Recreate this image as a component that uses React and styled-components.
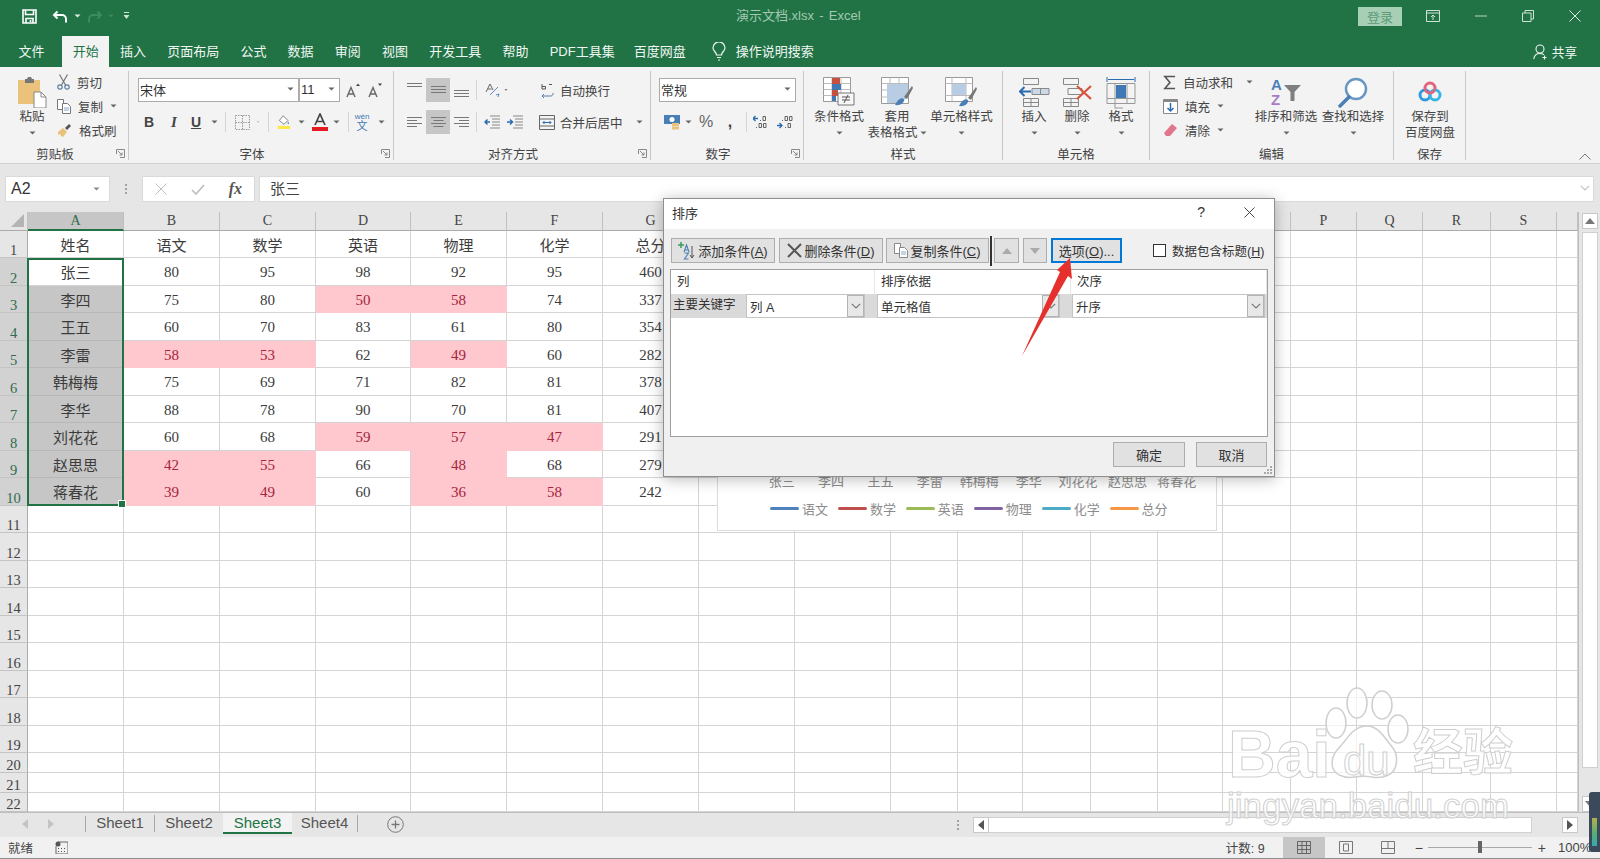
import React from "react";
import styled, { createGlobalStyle } from "styled-components";

const UI = `"Liberation Sans", "Noto Sans CJK SC", sans-serif`;
const CELL = `"Liberation Serif", "Noto Sans CJK SC", serif`;
const GREEN = "#217346";

const Global = createGlobalStyle`
  html, body { margin: 0; height: 100%; overflow: hidden; background: #fff; }
  #root { height: 100%; }
`;

const Page = styled.div`
  position: relative;
  width: 1600px;
  height: 859px;
  overflow: hidden;
  display: flex;
  flex-direction: column;
  font-family: ${UI};
  color: #444;
`;

/* ---------- title bar ---------- */
const TitleBar = styled.div`
  height: 34px;
  box-sizing: border-box;
  padding-bottom: 2px;
  background: ${GREEN};
  display: flex;
  align-items: center;
  flex: none;
`;
const QuickBtn = styled.span`
  width: ${p => p.$w}px;
  margin-left: ${p => p.$ml || 0}px;
  display: flex;
  justify-content: center;
  align-items: center;
  flex: none;
`;
const DocTitle = styled.div`
  width: 125px;
  margin-left: 598px;
  margin-bottom: 3px;
  font-size: 13px;
  word-spacing: -1px;
  color: #a3c9b1;
  white-space: pre;
`;
const Login = styled.button`
  margin-left: 497px;
  width: 44px;
  height: 19px;
  padding: 0;
  border: 0;
  background: #a6cfb6;
  color: #5d9a78;
  font: 13px ${UI};
`;
const WinBtn = styled.span`
  width: 47px;
  margin-left: ${p => p.$ml || 0}px;
  display: flex;
  justify-content: center;
  align-items: center;
  flex: none;
`;

/* ---------- tabs ---------- */
const TabRow = styled.div`
  height: 33px;
  background: ${GREEN};
  display: flex;
  align-items: flex-end;
  padding-left: 8px;
  flex: none;
`;
const Tab = styled.div`
  height: 31px;
  line-height: 30px;
  padding: 0 ${p => (p.$tight ? 0 : 10.6)}px;
  margin-right: ${p => p.$mr || 0}px;
  margin-left: ${p => p.$ml || 0}px;
  font-size: 13px;
  color: ${p => (p.$active ? GREEN : "#f0f6f2")};
  background: ${p => (p.$active ? "#f3f3f3" : "transparent")};
  white-space: nowrap;
  display: flex;
  align-items: center;
`;
const Share = styled.div`
  margin-left: auto;
  margin-right: 23px;
  height: 31px;
  display: flex;
  align-items: center;
  gap: 4px;
  font-size: 12.6px;
  color: #f0f6f2;
`;

/* ---------- ribbon ---------- */
const Ribbon = styled.div`
  height: 97px;
  background: #f3f3f3;
  border-bottom: 1px solid #d2d2d2;
  box-sizing: border-box;
  padding-top: 4px;
  display: flex;
  position: relative;
  flex: none;
  font-size: 12.5px;
`;
const Group = styled.section`
  width: ${p => p.$w}px;
  height: 89px;
  box-sizing: border-box;
  border-right: 1px solid #c8c8c8;
  position: relative;
  display: flex;
  flex-direction: column;
  flex: none;
`;
const GroupBody = styled.div`
  height: 76px;
  flex: none;
  display: flex;
  padding-left: ${p => p.$pl || 0}px;
`;
const GroupLabel = styled.div`
  height: 16px;
  line-height: 16px;
  flex: none;
  text-align: center;
  padding-right: ${p => (p.$launcher ? 18 : 0)}px;
  color: #444;
  font-size: 12.5px;
`;
const Launcher = styled.span`
  position: absolute;
  right: 3px;
  bottom: 2px;
  width: 9px;
  height: 9px;
  display: flex;
`;
const Large = styled.div`
  width: ${p => p.$w}px;
  flex: none;
  display: flex;
  flex-direction: column;
  align-items: center;
  line-height: 16px;
  white-space: nowrap;
`;
const LargeIcon = styled.div`
  height: 34px;
  margin-top: 4px;
  display: flex;
  align-items: center;
  justify-content: center;
`;
const LargeCaret = styled.div`
  height: 16px;
  display: flex;
  align-items: center;
`;
const LargeLine = styled.span`
  display: flex;
  align-items: center;
  gap: 2px;
`;
const Stack = styled.div`
  width: ${p => p.$w}px;
  padding-left: ${p => p.$pl || 0}px;
  box-sizing: border-box;
  flex: none;
  margin-top: -1px;
  display: flex;
  flex-direction: column;
`;
const SmallItem = styled.div`
  height: 24px;
  display: flex;
  align-items: center;
  gap: 7px;
  white-space: nowrap;
`;
const CaretGap = styled.span`
  margin-left: ${p => p.$ml}px;
  display: flex;
`;
const Rows = styled.div`
  display: flex;
  flex-direction: column;
  padding-top: 7px;
  gap: 8px;
`;
const Row = styled.div`
  height: 24px;
  margin-left: ${p => p.$ml || 0}px;
  display: flex;
  align-items: center;
`;
const Tool = styled.span`
  width: ${p => p.$w}px;
  height: 24px;
  flex: none;
  display: flex;
  align-items: center;
  justify-content: center;
  background: ${p => (p.$on ? "#c6c6c6" : "transparent")};
  font: ${p => (p.$bold ? "bold 14px" : "14px")} ${UI};
  color: #444;
`;
const ItalicI = styled.i`
  font: italic bold 15px ${CELL};
`;
const Percent = styled.span`
  font-size: 16px;
  color: #666;
`;
const Comma = styled.span`
  font-size: 16px;
  font-weight: 700;
`;
const PhoneticMark = styled.span`
  display: flex;
  flex-direction: column;
  align-items: center;
  font-size: 8px;
  line-height: 8px;
  color: #3f78b5;
  b {
    font-size: 11px;
    line-height: 11px;
    font-weight: 400;
  }
`;
const RowSep = styled.span`
  width: 1px;
  height: 20px;
  background: #d4d4d4;
`;
const Combo = styled.div`
  width: ${p => p.$w}px;
  height: 24px;
  box-sizing: border-box;
  margin-left: ${p => p.$ml || 0}px;
  background: #fff;
  border: 1px solid #ababab;
  display: flex;
  align-items: center;
  justify-content: space-between;
  padding: 0 4px 2px 1px;
  font-size: 13px;
  color: #333;
  flex: none;
`;
const WrapItem = styled.div`
  display: flex;
  align-items: center;
  gap: ${p => p.$gap}px;
  margin-left: ${p => p.$ml}px;
  white-space: nowrap;
`;
const Collapse = styled.span`
  position: absolute;
  right: 9px;
  bottom: 3px;
  display: flex;
`;

/* ---------- formula bar ---------- */
const FormulaBar = styled.div`
  height: 48px;
  background: #e6e6e6;
  padding: 12px 6px 10px 5px;
  box-sizing: border-box;
  display: flex;
  flex: none;
`;
const NameBox = styled.div`
  width: 105px;
  height: 26px;
  background: #fff;
  border: 1px solid #dadada;
  box-sizing: border-box;
  display: flex;
  align-items: center;
  justify-content: space-between;
  padding: 0 9px 1px 5px;
  font-size: 16px;
  color: #333;
`;
const Dots = styled.span`
  width: ${p => p.$w}px;
  display: flex;
  flex-direction: column;
  align-items: center;
  justify-content: center;
  gap: 2px;
  flex: none;
  i {
    width: 2px;
    height: 2px;
    background: #a0a0a0;
  }
`;
const FxBox = styled.div`
  width: 113px;
  height: 26px;
  box-sizing: border-box;
  background: #fff;
  border: 1px solid #dadada;
  display: flex;
  align-items: center;
  justify-content: space-between;
  padding: 0 12px;
`;
const FxText = styled.span`
  font: italic bold 16px ${CELL};
  color: #555;
`;
const FormulaInput = styled.div`
  flex: 1;
  height: 26px;
  margin-left: 4px;
  box-sizing: border-box;
  background: #fff;
  border: 1px solid #dadada;
  display: flex;
  align-items: center;
  justify-content: space-between;
  padding: 0 3px 3px 10px;
  font: 15px ${UI};
  color: #444;
`;

/* ---------- sheet ---------- */
const SheetRow = styled.div`
  height: 600px;
  display: flex;
  flex: none;
`;
const GridWrap = styled.div`
  position: relative;
  width: 1578px;
  overflow: hidden;
`;
const Grid = styled.div`
  display: grid;
  grid-template-columns: ${p => p.$cols};
  grid-template-rows: ${p => p.$rows};
  font: 15px ${CELL};
`;
const Corner = styled.div`
  background: #e6e6e6;
  border-right: 1px solid #c0c0c0;
  border-bottom: 1px solid #ababab;
  display: flex;
  align-items: flex-end;
  justify-content: flex-end;
  padding: 0 3px 3px 0;
  i {
    width: 0;
    height: 0;
    border-left: 13px solid transparent;
    border-bottom: 13px solid #b4b4b4;
  }
`;
const ColHead = styled.div`
  background: ${p => (p.$sel ? "#c6c6c6" : "#e6e6e6")};
  border-right: 1px solid #c0c0c0;
  border-bottom: ${p => (p.$sel ? `2px solid ${GREEN}` : "1px solid #ababab")};
  box-sizing: border-box;
  display: flex;
  align-items: center;
  justify-content: center;
  font-size: 14px;
  color: ${p => (p.$sel ? "#2f6b4f" : "#444")};
`;
const RowHead = styled.div`
  background: ${p => (p.$sel ? "#d2d2d2" : "#e6e6e6")};
  border-right: 1px solid #ababab;
  border-bottom: 1px solid #c4c4c4;
  box-sizing: border-box;
  display: flex;
  align-items: flex-end;
  justify-content: center;
  line-height: 14px;
  font-size: 14.5px;
  color: ${p => (p.$sel ? "#2f6b4f" : "#444")};
  overflow: hidden;
`;
const Cell = styled.div`
  box-sizing: border-box;
  padding-top: ${p => (p.$num ? 2 : 0)}px;
  display: flex;
  align-items: center;
  justify-content: center;
  background: ${p => (p.$pink ? "#ffc7ce" : p.$sel ? "#c6c6c6" : "#fff")};
  border-right: 1px solid ${p => (p.$pink ? "#ffc7ce" : p.$sel ? "#b8b8b8" : "#d4d4d4")};
  border-bottom: 1px solid ${p => (p.$pink ? "#ffc7ce" : p.$sel ? "#b8b8b8" : "#d4d4d4")};
  color: ${p => (p.$pink ? "#a3243b" : "#3c3c3c")};
  white-space: nowrap;
`;
const Selection = styled.div`
  position: absolute;
  left: 27px;
  top: 46px;
  width: 97px;
  height: 248px;
  box-sizing: border-box;
  border: 2px solid ${GREEN};
  i {
    position: absolute;
    right: -4px;
    bottom: -4px;
    width: 6px;
    height: 6px;
    background: ${GREEN};
    border: 1px solid #fff;
  }
`;
const Chart = styled.div`
  position: absolute;
  left: 717px;
  top: 30px;
  width: 500px;
  height: 289px;
  box-sizing: border-box;
  background: #fff;
  border: 1px solid #dcdcdc;
  display: flex;
  flex-direction: column;
  justify-content: flex-end;
  padding: 0 0 12px 39px;
  font: 13px ${UI};
  color: #8c8c8c;
`;
const ChartCats = styled.div`
  display: flex;
  margin-bottom: 9px;
  span {
    width: 49.4px;
    text-align: center;
    white-space: nowrap;
  }
`;
const ChartLegend = styled.div`
  display: flex;
  padding-left: 13px;
  gap: 9.9px;
`;
const LegendItem = styled.span`
  display: flex;
  align-items: center;
  gap: 3px;
  &::before {
    content: "";
    width: 29px;
    height: 3px;
    border-radius: 2px;
    background: ${p => p.$c};
  }
`;
const VScroll = styled.div`
  width: 22px;
  padding-top: 1px;
  background: #e6e6e6;
  border-left: 1px solid #bdbdbd;
  box-sizing: border-box;
  display: flex;
  flex-direction: column;
  align-items: center;
`;
const ScrollArrow = styled.span`
  width: 16px;
  height: 16px;
  box-sizing: border-box;
  margin-left: ${p => p.$ml || 0}px;
  background: #fff;
  border: 1px solid #c8c8c8;
  display: flex;
  align-items: center;
  justify-content: center;
  flex: none;
`;
const VThumb = styled.div`
  width: 16px;
  height: 536px;
  box-sizing: border-box;
  margin: 3px 0 28px;
  background: #fff;
  border: 1px solid #d0d0d0;
`;

/* ---------- sheet tabs ---------- */
const SheetTabs = styled.div`
  height: 25px;
  box-sizing: border-box;
  background: #e6e6e6;
  border-top: 1px solid #bdbdbd;
  display: flex;
  align-items: stretch;
  flex: none;
`;
const NavArrows = styled.div`
  width: 86px;
  box-sizing: border-box;
  padding-left: 22px;
  display: flex;
  align-items: center;
  gap: 20px;
  border-right: 1px solid #a8a8a8;
  margin: 3px 0 5px;
`;
const SheetTab = styled.div`
  width: ${p => p.$w}px;
  box-sizing: border-box;
  text-align: center;
  font: 15px/20px ${UI};
  color: ${p => (p.$active ? GREEN : "#555")};
  background: ${p => (p.$active ? "#f3f3f3" : "transparent")};
  border-bottom: ${p => (p.$active ? `2px solid ${GREEN}` : "0")};
  border-right: ${p => (p.$line ? "1px solid #a8a8a8" : "0")};
  height: ${p => (p.$active ? 21 : 17)}px;
  margin-top: ${p => (p.$active ? 0 : 2)}px;
  line-height: ${p => (p.$active ? 20 : 16)}px;
`;
const AddSheet = styled.span`
  margin-left: 29px;
  display: flex;
  align-items: center;
  margin-bottom: 1px;
`;
const HScroll = styled.div`
  margin-left: auto;
  margin-right: 22px;
  display: flex;
  align-items: center;
  height: 100%;
`;
const HThumb = styled.div`
  width: 543px;
  height: 16px;
  box-sizing: border-box;
  background: #fff;
  border: 1px solid #d0d0d0;
  border-left: 0;
  margin-right: 30px;
`;

/* ---------- status bar ---------- */
const StatusBar = styled.div`
  height: 22px;
  box-sizing: border-box;
  background: #f1f1f1;
  border-bottom: 1px solid #8f8f8f;
  display: flex;
  align-items: center;
  padding-left: 8px;
  font-size: 12.5px;
  color: #444;
  flex: none;
`;
const Count = styled.span`
  margin-left: auto;
  margin-right: 18px;
`;
const ViewBtn = styled.span`
  width: 42px;
  height: 21px;
  display: flex;
  align-items: center;
  justify-content: center;
  background: ${p => (p.$on ? "#c6c6c6" : "transparent")};
`;
const ZoomSign = styled.span`
  margin-left: ${p => p.$ml || 0}px;
  font-size: 14px;
`;
const ZoomTrack = styled.div`
  position: relative;
  width: 104px;
  height: 1px;
  background: #a8a8a8;
  margin: 0 6px 0 5px;
  i {
    position: absolute;
    left: 50px;
    top: -6px;
    width: 4px;
    height: 12px;
    background: #666;
  }
`;
const ZoomText = styled.span`
  width: 42px;
  margin-left: 12px;
  font-size: 13px;
  white-space: nowrap;
`;
const Meter = styled.div`
  position: absolute;
  right: 0;
  top: 792px;
  width: 11px;
  height: 60px;
  background: #3b4a5a;
  border-radius: 3px 0 0 3px;
  display: flex;
  justify-content: center;
  padding-top: 26px;
  box-sizing: border-box;
  i {
    width: 5px;
    height: 28px;
    background: linear-gradient(#b3b04a, #4fae7a 60%, #3aa8b0);
  }
`;

/* ---------- sort dialog ---------- */
const Dialog = styled.div`
  position: absolute;
  left: 663px;
  top: 198px;
  width: 612px;
  height: 279px;
  box-sizing: border-box;
  border: 1px solid #8f8f8f;
  background: #f0f0f0;
  box-shadow: 0 2px 14px rgba(0, 0, 0, 0.28);
  display: flex;
  flex-direction: column;
  font: 13px ${UI};
  color: #333;
`;
const DialogTitle = styled.div`
  height: 30px;
  box-sizing: border-box;
  padding: 0 0 4px 8px;
  background: #fff;
  display: flex;
  align-items: center;
  flex: none;
`;
const HelpMark = styled.span`
  margin-left: auto;
  margin-right: 39px;
  font-size: 14px;
`;
const CloseMark = styled.span`
  margin-right: 19px;
  display: flex;
`;
const DialogTools = styled.div`
  height: 25px;
  margin-top: 9px;
  padding-left: 7px;
  display: flex;
  align-items: center;
  flex: none;
`;
const DlgBtn = styled.button`
  width: ${p => p.$w}px;
  height: 25px;
  margin-left: ${p => p.$ml || 0}px;
  box-sizing: border-box;
  padding: 0;
  background: #e1e1e1;
  border: ${p => (p.$focus ? "2px solid #0078d7" : "1px solid #adadad")};
  display: flex;
  align-items: center;
  justify-content: center;
  gap: 2px;
  font: 13px ${UI};
  color: #333;
  white-space: nowrap;
  flex: none;
`;
const ToolDivider = styled.span`
  width: 2px;
  height: 30px;
  background: #333;
  margin: 0 2px 0 1px;
  flex: none;
`;
const CheckLabel = styled.label`
  margin-left: 31px;
  display: flex;
  align-items: center;
  gap: 6px;
  white-space: nowrap;
  font-size: 12.5px;
  i {
    width: 13px;
    height: 13px;
    box-sizing: border-box;
    background: #fff;
    border: 1px solid #333;
  }
`;
const SortList = styled.div`
  height: 168px;
  margin: 6px 6px 0 6px;
  box-sizing: border-box;
  background: #fff;
  border: 1px solid #a0a0a0;
  flex: none;
`;
const ListHead = styled.div`
  height: 24px;
  display: grid;
  grid-template-columns: 204px 196px 1fr;
  align-items: center;
  span {
    padding-left: 6px;
    height: 100%;
    line-height: 24px;
    border-right: 1px solid #e6e6e6;
    box-sizing: border-box;
    font-size: 12.5px;
  }
`;
const ListRow = styled.div`
  height: 24px;
  background: #dadada;
  display: flex;
  align-items: center;
  padding: 0 2px 0 2px;
  gap: 12px;
  font-size: 12.5px;
`;
const RowLabel = styled.span`
  width: 73px;
  margin-right: -12px;
  white-space: nowrap;
  flex: none;
  margin-top: -6px;
`;
const DlgCombo = styled.div`
  width: ${p => p.$w}px;
  height: 24px;
  box-sizing: border-box;
  background: #fff;
  border: 1px solid #c4c4c4;
  display: flex;
  align-items: center;
  justify-content: space-between;
  padding-left: 3px;
  flex: none;
`;
const ComboArrow = styled.span`
  width: 17px;
  height: 100%;
  box-sizing: border-box;
  background: #e8e8e8;
  border: 1px solid #b4b4b4;
  display: flex;
  align-items: center;
  justify-content: center;
`;
const DialogFoot = styled.div`
  margin-top: 5px;
  padding-right: 7px;
  display: flex;
  justify-content: flex-end;
  gap: 11px;
`;
const Grip = styled.span`
  position: absolute;
  right: 1px;
  bottom: 1px;
  display: flex;
`;
const ArrowMark = styled.svg`
  position: absolute;
  left: 1010px;
  top: 250px;
`;

/* ---------- watermark ---------- */
const Watermark = styled.div`
  position: absolute;
  left: 1225px;
  top: 680px;
  width: 300px;
  height: 150px;
  pointer-events: none;
`;
const MarkText = styled.span`
  position: absolute;
  left: ${p => p.$x}px;
  top: ${p => p.$y}px;
  font: ${p => p.$weight || 700} ${p => p.$size}px/${p => p.$lh || 1} ${UI};
  color: rgba(255, 255, 255, 0.8);
  -webkit-text-stroke: 1px #cfcfcf;
  white-space: nowrap;
`;
const Paw = styled.svg`
  position: absolute;
  left: 100px;
  top: 0;
`;

/* ---------- icons ---------- */
const Caret = ({ c = "#666" }) => (
  <svg width="7" height="4" viewBox="0 0 7 4"><path d="M0.5 0.5h6L3.5 3.5z" fill={c} /></svg>
);
const SaveIcon = () => (
  <svg width="15" height="15" viewBox="0 0 15 15" fill="none" stroke="#fff" strokeWidth="1.6">
    <path d="M1 1h13v13H1z" /><path d="M3.5 1v4.5h8V1" /><path d="M4 14V9.5h7V14" /><path d="M8.5 11v2" />
  </svg>
);
const UndoIcon = ({ c }) => (
  <svg width="16" height="13" viewBox="0 0 16 13" fill="none" stroke={c} strokeWidth="2">
    <path d="M5.5 1.5 2 5l3.5 3.5" /><path d="M2 5h8a4 4 0 0 1 4 4v3.5" />
  </svg>
);
const RedoIcon = ({ c }) => (
  <svg width="16" height="13" viewBox="0 0 16 13" fill="none" stroke={c} strokeWidth="2">
    <path d="M10.5 1.5 14 5l-3.5 3.5" /><path d="M14 5H6a4 4 0 0 0-4 4v3.5" />
  </svg>
);
const Customize = () => (
  <svg width="7" height="8" viewBox="0 0 7 8" fill="#cfe3d6"><path d="M1 0h5v1H1zM0.5 3h6L3.5 7z" /></svg>
);
const DisplayIcon = () => (
  <svg width="14" height="12" viewBox="0 0 14 12" fill="none" stroke="#cfe3d6">
    <path d="M.5.5h13v11H.5zM.5 3h13" /><path d="M7 10V5M5 7l2-2 2 2" />
  </svg>
);
const MinIcon = () => <svg width="12" height="2" viewBox="0 0 12 2"><path d="M0 1h12" stroke="#bcd6c6" /></svg>;
const RestoreIcon = () => (
  <svg width="12" height="12" viewBox="0 0 12 12" fill="none" stroke="#cfe3d6">
    <path d="M.5 3h8.5v8.5H.5zM3 3V.5h8.500V9H9" />
  </svg>
);
const CrossIcon = ({ c = "#dfeee5", s = 12 }) => (
  <svg width={s} height={s} viewBox="0 0 12 12" fill="none" stroke={c}><path d="M.5.5l11 11M11.5.5l-11 11" /></svg>
);
const Bulb = () => (
  <svg width="14" height="19" viewBox="0 0 14 19" fill="none" stroke="#f0f6f2" strokeWidth="1.2">
    <path d="M4.500 13c0-3-3.500-4-3.500-7a6 6 0 0 1 12 0c0 3-3.500 4-3.500 7z" /><path d="M5 15.500h4M6 18h2" />
  </svg>
);
const UserIcon = () => (
  <svg width="15" height="16" viewBox="0 0 15 16" fill="none" stroke="#f0f6f2" strokeWidth="1.1">
    <circle cx="7" cy="5" r="4" /><path d="M.8 15c.4-3.500 3-5.500 6.200-5.500 1.500 0 2.800.4 3.800 1.200M11.500 11.500v4M9.500 13.500h4" />
  </svg>
);
const PasteIcon = () => (
  <svg width="30" height="32" viewBox="0 0 30 32">
    <path d="M1 4h22v24H1z" fill="#eac27c" />
    <path d="M8 3h2l1-2h3l1 2h2v4H8z" fill="#777" />
    <path d="M17 16h7l5 5v11H17z" fill="#fff" stroke="#888" />
    <path d="M24 16v5h5" fill="none" stroke="#888" />
  </svg>
);
const ScissorsIcon = () => (
  <svg width="13" height="16" viewBox="0 0 13 16" fill="none" stroke="#5b7da3" strokeWidth="1.2">
    <path d="M2.500 0.500 8.500 11M10.500 0.500 4.500 11" stroke="#777" /><circle cx="3" cy="13" r="2.200" /><circle cx="10" cy="13" r="2.200" />
  </svg>
);
const CopyIcon = ({ c = "#777" }) => (
  <svg width="14" height="15" viewBox="0 0 14 15" fill="#fff" stroke={c}>
    <path d="M.5.500h6v10h-6z" /><path d="M5.500 4.500h5l3 3v7h-8z" /><path d="M7 9h5M7 11h5" stroke="#8aa7c7" />
  </svg>
);
const BrushIcon = () => (
  <svg width="15" height="15" viewBox="0 0 15 15">
    <path d="M1 9l5-4 4 4-4 5-2-1-1-2-2 1z" fill="#e8c27a" />
    <path d="M8 5l4-4 2 2-4 4z" fill="#555" />
  </svg>
);
const SizeUp = ({ up }) => (
  <svg width="14" height="15" viewBox="0 0 14 15">
    <path d="M1 14 5 4.500 9 14M2.500 11h5" fill="none" stroke="#666" strokeWidth="1.400" />
    <path d={up ? "M10 3 12 .5 14 3z" : "M10 .5h4L12 3z"} fill="#444" />
  </svg>
);
const BorderIcon = () => (
  <svg width="15" height="15" viewBox="0 0 15 15" fill="none" stroke="#9a9a9a" strokeDasharray="1.500 1">
    <path d="M.5.500h14v14H.5zM7.500.5v14M.5 7.500h14" />
  </svg>
);
const FillIcon = () => (
  <svg width="18" height="18" viewBox="0 0 18 18">
    <path d="M8 1l6 6-5 5-6-5z" fill="#fff" stroke="#666" />
    <path d="M14 8c1 1.500 2 2.500 1 3.500s-2-1-1-3.500" fill="#5b8bbf" />
    <path d="M1 14h16v4H1z" fill="#ffe94a" />
  </svg>
);
const FontColor = () => (
  <svg width="18" height="18" viewBox="0 0 18 18">
    <path d="M4 12 9 1l5 11M6 8.500h6" fill="none" stroke="#444" strokeWidth="1.700" />
    <path d="M1 14h16v4H1z" fill="#e31b23" />
  </svg>
);
const Lines = ({ widths, top = 0, align = "center" }) => (
  <svg width="15" height="16" viewBox="0 0 15 16" stroke="#777">
    {widths.map((w, i) => {
      const x = align === "center" ? (15 - w) / 2 : align === "right" ? 15 - w : 0;
      return <path key={i} d={`M${x} ${top + i * 3 + 0.5}h${w}`} />;
    })}
  </svg>
);
const OrientIcon = () => (
  <svg width="15" height="14" viewBox="0 0 15 14" fill="none" stroke="#666">
    <path d="M1 9 5 1l3 6M2.500 6h4" /><path d="M5 12 13 4M11 12l3-1-1 3" stroke="#5b8bbf" />
  </svg>
);
const Indent = ({ flip }) => (
  <svg width="16" height="14" viewBox="0 0 16 14" fill="none">
    <path d="M6 1h10M8 4h8M8 7h8M8 10h8M6 13h10" stroke="#888" />
    <path d={flip ? "M0 7h5M3 4.500 5.500 7 3 9.500" : "M6 7H1M3.500 4.500 1 7l2.500 2.500"} stroke="#2b6cb0" strokeWidth="1.500" />
  </svg>
);
const WrapIcon = () => (
  <svg width="14" height="15" viewBox="0 0 14 15" fill="none" stroke="#5b7da3">
    <path d="M1 13h8a2.500 2.500 0 0 0 3-3" /><path d="M3 11 1 13l2 2" />
    <path d="M1 1v5M1 3.500h3.500v2.500H1M8 1.500h3" stroke="#555" />
  </svg>
);
const MergeIcon = () => (
  <svg width="16" height="15" viewBox="0 0 16 15" fill="none" stroke="#666">
    <path d="M.5.500h15v14H.5zM.5 4h15M.5 11h15" /><path d="M4 7.500h8M5.500 6 4 7.500 5.500 9M10.500 6 12 7.500 10.500 9" stroke="#2b6cb0" />
  </svg>
);
const CurrencyIcon = () => (
  <svg width="17" height="17" viewBox="0 0 17 17">
    <path d="M0 1h16v9H0z" fill="#4a7fb5" /><circle cx="8" cy="5.500" r="2.500" fill="#fff" />
    <path d="M8 9h7v3H8zM8 12.500h7v3H8z" fill="#eac27c" />
  </svg>
);
const Decimal = ({ inc }) => (
  <svg width="16" height="14" viewBox="0 0 16 14" fill="none">
    {inc ? <path d="M0 3.500h5M2.500 1 0 3.500 2.500 6" stroke="#2b6cb0" strokeWidth="1.300" /> : <path d="M0 10.500h5M2.500 8 5 10.500 2.500 13" stroke="#2b6cb0" strokeWidth="1.300" />}
    <path d={inc ? "M7 5.500h1M10 1.500h2.500v4H10zM3 12.500h1M6 8.500h2.500v4H6zM10.500 8.500h2.500v4h-2.500z" : "M5 5.500h1M8 1.500h2.500v4H8zM12.500 1.500H15v4h-2.500zM8 12.500h1M11 8.500h2.500v4H11z"} stroke="#555" strokeWidth=".9" />
  </svg>
);
const CondIcon = () => (
  <svg width="32" height="31" viewBox="0 0 32 31">
    <path d="M.5.500h27v24H.5z" fill="#fff" stroke="#999" />
    <path d="M9 .5v24M18 .5v24M.5 6.500h27M.5 12.500h27M.5 18.500h27" stroke="#bbb" />
    <path d="M9 1h8v6H9z" fill="#c8503c" /><path d="M9 7h9v6H9z" fill="#3f78b5" /><path d="M9 13h6v6H9z" fill="#c8503c" /><path d="M9 19h4v5H9z" fill="#3f78b5" />
    <path d="M15 16h16v12H15z" fill="#f7f7f7" stroke="#777" />
    <path d="M19 20h8M19 23h8M25 18l-4 8" stroke="#555" />
  </svg>
);
const TableIcon = () => (
  <svg width="33" height="31" viewBox="0 0 33 31">
    <path d="M.5.500h27v26H.5z" fill="#fff" stroke="#999" />
    <path d="M.5 6.500h27M.5 13h27M.5 20h27M9 .5v26M18 .5v26" stroke="#bbb" />
    <path d="M6 7h21v14l-10 5H6z" fill="#b8cce4" />
    <path d="M14 28c3-6 6-8 9-6 1 3-3 7-9 6z" fill="#4a7fb5" />
    <path d="M23 20 31 9l1 2-6 11z" fill="#777" />
  </svg>
);
const CellStyleIcon = () => (
  <svg width="33" height="31" viewBox="0 0 33 31">
    <path d="M.5.500h27v24H.5z" fill="#fff" stroke="#999" />
    <path d="M.5 6.500h27M.5 18.500h27M7 .5v24M21 .5v24" stroke="#bbb" />
    <path d="M7 7h14v11H7z" fill="#b8cce4" />
    <path d="M14 29c3-6 6-8 9-6 1 3-3 7-9 6z" fill="#4a7fb5" />
    <path d="M23 21 31 10l1 2-6 11z" fill="#777" />
  </svg>
);
const InsertIcon = () => (
  <svg width="31" height="31" viewBox="0 0 31 31" fill="none" stroke="#888">
    <path d="M4.500 1.500h15v6h-15zM4.500 21.500h15v8h-15zM12 21.500v8M4.500 25.500h15" />
    <path d="M13 11.500h17v6H13zM21.500 11.500v6" fill="#cbd8e6" />
    <path d="M1 14.500h11M5.500 10 1 14.500 5.500 19" stroke="#2b6cb0" strokeWidth="2" />
  </svg>
);
const DeleteIcon = () => (
  <svg width="31" height="31" viewBox="0 0 31 31" fill="none" stroke="#888">
    <path d="M1.500 1.500h15v6h-15zM1.500 21.500h15v8h-15zM9 21.500v8M1.500 25.500h15M6 11.500h14v6H6z" />
    <path d="M15 9l14 13M29 9 15 22" stroke="#d9533e" strokeWidth="2.200" />
  </svg>
);
const FormatIcon = () => (
  <svg width="30" height="33" viewBox="0 0 30 33" fill="none" stroke="#999">
    <path d="M1 1v5M29 1v5M2 3.500h26" stroke="#2b6cb0" />
    <path d="M1 7.500h28v20H1zM1 22.500h28M9 7.500v25M21 7.500v20M9 32h8" />
    <path d="M10 9h10v13H10z" fill="#3f78b5" stroke="none" />
  </svg>
);
const SumIcon = () => (
  <svg width="14" height="15" viewBox="0 0 14 15" fill="none" stroke="#555" strokeWidth="1.700">
    <path d="M13 1H2l5.500 6.500L2 14h11" />
  </svg>
);
const FillDown = () => (
  <svg width="15" height="15" viewBox="0 0 15 15" fill="#fff" stroke="#888">
    <path d="M.5.500h14v14H.5z" /><path d="M.5 2h14" strokeWidth="2" />
    <path d="M7.500 4v8M4.500 9l3 3 3-3" fill="none" stroke="#2b6cb0" strokeWidth="1.500" />
  </svg>
);
const Eraser = () => (
  <svg width="15" height="14" viewBox="0 0 15 14"><path d="M9 1l5 4-7 8H3L1 10z" fill="#e0768c" /></svg>
);
const SortFilter = () => (
  <svg width="30" height="31" viewBox="0 0 30 31">
    <text x="0" y="13" fontSize="15" fontWeight="bold" fontFamily="Liberation Sans" fill="#4a7fb5">A</text>
    <text x="0" y="28" fontSize="15" fontWeight="bold" fontFamily="Liberation Sans" fill="#a77cc7">Z</text>
    <path d="M13 8h17l-6.500 7v9h-4v-9z" fill="#7f7f7f" />
  </svg>
);
const FindIcon = () => (
  <svg width="30" height="31" viewBox="0 0 30 31" fill="none">
    <circle cx="18" cy="12" r="10" fill="#fff" stroke="#6a96c2" strokeWidth="2.500" />
    <path d="M11 20 2 29" stroke="#4a7fb5" strokeWidth="3.500" strokeLinecap="round" />
  </svg>
);
const BaiduDisk = () => (
  <svg width="24" height="24" viewBox="0 0 24 24" fill="none" strokeWidth="3">
    <circle cx="7" cy="15" r="5" stroke="#2f9bdc" />
    <circle cx="17" cy="15" r="5" stroke="#37b5e6" />
    <circle cx="12" cy="8" r="5" stroke="#e0657d" />
  </svg>
);
const LaunchIcon = () => (
  <svg width="9" height="9" viewBox="0 0 9 9" fill="none" stroke="#888"><path d="M.5 5V.5H8.500V8.500H4" /><path d="M2 2l4 4M6 3.500V6H3.500" /></svg>
);
const ChevronUp = () => (
  <svg width="12" height="7" viewBox="0 0 12 7" fill="none" stroke="#777"><path d="M.5 6.500 6 1l5.500 5.500" /></svg>
);
const ChevronDown = ({ c = "#666" }) => (
  <svg width="10" height="6" viewBox="0 0 10 6" fill="none" stroke={c} strokeWidth="1.200"><path d="M.8.800 5 5 9.200.8" /></svg>
);
const Check = () => (
  <svg width="14" height="11" viewBox="0 0 14 11" fill="none" stroke="#bdbdbd" strokeWidth="1.600"><path d="M1 6l4 4 8-9" /></svg>
);
const Tri = ({ dir, c = "#aaa" }) => {
  const d = {
    left: "M6 0v10L0 5z",
    right: "M0 0v10l6-5z",
    up: "M0 6h10L5 0z",
    down: "M0 0h10L5 6z",
  }[dir];
  const h = dir === "left" || dir === "right";
  return (
    <svg width={h ? 6 : 10} height={h ? 10 : 6} viewBox={h ? "0 0 6 10" : "0 0 10 6"}><path d={d} fill={c} /></svg>
  );
};
const AddCondIcon = () => (
  <svg width="18" height="18" viewBox="0 0 18 18">
    <path d="M3 0v6M0 3h6" stroke="#3a9b5c" strokeWidth="1.500" />
    <path d="M6 10 8.500 3 11 10M7 8h3M6.500 11h4l-4 6h4" fill="none" stroke="#4a7fb5" strokeWidth="1.100" />
    <path d="M14 4v12M12 13l2 3 2-3" fill="none" stroke="#555" />
  </svg>
);
const BigX = () => (
  <svg width="15" height="15" viewBox="0 0 15 15" stroke="#555" strokeWidth="2"><path d="M1 1l13 13M14 1 1 14" /></svg>
);
const GripIcon = () => (
  <svg width="9" height="9" viewBox="0 0 9 9" fill="#a8a8a8">
    <path d="M6 0h2v2H6zM3 3h2v2H3zM6 3h2v2H6zM0 6h2v2H0zM3 6h2v2H3zM6 6h2v2H6z" />
  </svg>
);
const MacroIcon = () => (
  <svg width="13" height="13" viewBox="0 0 13 13">
    <circle cx="3" cy="3" r="2.500" fill="#555" /><path d="M3 1h10v12H1V5" fill="none" stroke="#666" />
    <path d="M3 7h1v1H3zM6 7h1v1H6zM9 7h1v1H9zM3 10h1v1H3zM6 10h1v1H6zM9 10h1v1H9z" fill="#555" />
  </svg>
);
const NormalView = () => (
  <svg width="14" height="13" viewBox="0 0 14 13" fill="none" stroke="#666"><path d="M.5.500h13v12H.5zM.5 4.500h13M.5 8.500h13M5 .5v12M9.500.5v12" /></svg>
);
const PageView = () => (
  <svg width="14" height="13" viewBox="0 0 14 13" fill="none" stroke="#777"><path d="M.5.500h13v12H.5zM4.500 3h5v7h-5z" /></svg>
);
const BreakView = () => (
  <svg width="14" height="13" viewBox="0 0 14 13" fill="none" stroke="#777"><path d="M.5.500h13v12H.5zM.5 7.500h13M7 .5v7" /></svg>
);

/* ---------- data ---------- */
const COL_EDGES = [28, 124, 220, 316, 411, 507, 603, 699, 795, 891, 958, 1023, 1091, 1158, 1223, 1291, 1357, 1423, 1491, 1557, 1578];
const ROW_EDGES = [231, 258, 286, 313, 341, 368, 396, 423, 451, 478, 506, 533, 561, 588, 616, 643, 671, 698, 726, 753, 773, 793, 812];
const LETTERS = "ABCDEFGHIJKLMNOPQRS".split("").concat("");
const TABLE = [
  ["姓名", "语文", "数学", "英语", "物理", "化学", "总分"],
  ["张三", 80, 95, 98, 92, 95, 460],
  ["李四", 75, 80, 50, 58, 74, 337],
  ["王五", 60, 70, 83, 61, 80, 354],
  ["李雷", 58, 53, 62, 49, 60, 282],
  ["韩梅梅", 75, 69, 71, 82, 81, 378],
  ["李华", 88, 78, 90, 70, 81, 407],
  ["刘花花", 60, 68, 59, 57, 47, 291],
  ["赵思思", 42, 55, 66, 48, 68, 279],
  ["蒋春花", 39, 49, 60, 36, 58, 242],
];
const colWidths = COL_EDGES.slice(1).map((e, i) => e - COL_EDGES[i]);
const rowHeights = ROW_EDGES.map((e, i) => e - (i ? ROW_EDGES[i - 1] : 212));
const LEGEND = [
  ["语文", "#4f81bd"],
  ["数学", "#c0504d"],
  ["英语", "#9bbb59"],
  ["物理", "#8064a2"],
  ["化学", "#4bacc6"],
  ["总分", "#f79646"],
];
const NAMES = TABLE.slice(1).map(r => r[0]);
const TABS = [
  ["文件", { $mr: 7 }], ["开始", { $active: true }], ["插入"], ["页面布局"], ["公式"], ["数据"], ["审阅"], ["视图"], ["开发工具"], ["帮助"],
  ["PDF工具集", { $ml: 0 }], ["百度网盘", { $ml: -2 }],
];

const Sheet = () => (
  <GridWrap>
    <Grid
      $cols={`28px ${colWidths.map(w => w + "px").join(" ")}`}
      $rows={rowHeights.map(h => h + "px").join(" ")}
    >
      <Corner><i /></Corner>
      {LETTERS.map((l, i) => <ColHead key={i} $sel={i === 0}>{l}</ColHead>)}
      {rowHeights.slice(1).map((_, r) => (
        <React.Fragment key={r}>
          <RowHead $sel={r >= 1 && r <= 9}>{r + 1}</RowHead>
          {LETTERS.map((l, c) => {
            const value = TABLE[r] ? TABLE[r][c] : undefined;
            const num = typeof value === "number";
            return (
              <Cell
                key={c}
                $num={num}
                $pink={num && c < 6 && value < 60}
                $sel={c === 0 && r >= 2 && r <= 9}
              >
                {value}
              </Cell>
            );
          })}
        </React.Fragment>
      ))}
    </Grid>
    <Chart>
      <ChartCats>{NAMES.map(n => <span key={n}>{n}</span>)}</ChartCats>
      <ChartLegend>
        {LEGEND.map(([t, c]) => <LegendItem key={t} $c={c}>{t}</LegendItem>)}
      </ChartLegend>
    </Chart>
    <Selection><i /></Selection>
  </GridWrap>
);

const SortDialog = () => (
  <Dialog>
    <DialogTitle>
      排序
      <HelpMark>?</HelpMark>
      <CloseMark><CrossIcon c="#333" s={11} /></CloseMark>
    </DialogTitle>
    <DialogTools>
      <DlgBtn $w={104}><AddCondIcon /><span>添加条件(<u>A</u>)</span></DlgBtn>
      <DlgBtn $w={104} $ml={4}><BigX /><span>删除条件(<u>D</u>)</span></DlgBtn>
      <DlgBtn $w={103} $ml={3}><CopyIcon c="#888" /><span>复制条件(<u>C</u>)</span></DlgBtn>
      <ToolDivider />
      <DlgBtn $w={25}><Tri dir="up" /></DlgBtn>
      <DlgBtn $w={24} $ml={4}><Tri dir="down" /></DlgBtn>
      <DlgBtn $w={71} $ml={4} $focus><span>选项(<u>O</u>)...</span></DlgBtn>
      <CheckLabel><i /><span>数据包含标题(<u>H</u>)</span></CheckLabel>
    </DialogTools>
    <SortList>
      <ListHead>
        <span>列</span>
        <span>排序依据</span>
        <span>次序</span>
      </ListHead>
      <ListRow>
        <RowLabel>主要关键字</RowLabel>
        <DlgCombo $w={119}>列 A<ComboArrow><ChevronDown c="#777" /></ComboArrow></DlgCombo>
        <DlgCombo $w={183}>单元格值<ComboArrow><ChevronDown c="#777" /></ComboArrow></DlgCombo>
        <DlgCombo $w={193}>升序<ComboArrow><ChevronDown c="#777" /></ComboArrow></DlgCombo>
      </ListRow>
    </SortList>
    <DialogFoot>
      <DlgBtn $w={72}>确定</DlgBtn>
      <DlgBtn $w={71}>取消</DlgBtn>
    </DialogFoot>
    <Grip><GripIcon /></Grip>
  </Dialog>
);

export default function App() {
  return (
    <Page>
      <Global />
      <TitleBar>
        <QuickBtn $w={22} $ml={18}><SaveIcon /></QuickBtn>
        <QuickBtn $w={26} $ml={7}><UndoIcon c="#fff" /></QuickBtn>
        <QuickBtn $w={8}><Caret c="#dfeee5" /></QuickBtn>
        <QuickBtn $w={26} $ml={1}><RedoIcon c="#3f8a60" /></QuickBtn>
        <QuickBtn $w={6}><Caret c="#3f8a60" /></QuickBtn>
        <QuickBtn $w={24}><Customize /></QuickBtn>
        <DocTitle>演示文档.xlsx  -  Excel</DocTitle>
        <Login>登录</Login>
        <QuickBtn $w={20} $ml={21}><DisplayIcon /></QuickBtn>
        <WinBtn $ml={14}><MinIcon /></WinBtn>
        <WinBtn><RestoreIcon /></WinBtn>
        <WinBtn><CrossIcon /></WinBtn>
      </TitleBar>
      <TabRow>
        {TABS.map(([t, props]) => <Tab key={t} {...props}>{t}</Tab>)}
        <Tab $ml={5}><Bulb /></Tab>
        <Tab $tight $ml={-1}>操作说明搜索</Tab>
        <Share><UserIcon />共享</Share>
      </TabRow>
      <Ribbon>
        <Group $w={129}>
          <GroupBody $pl={17}>
            <Large $w={30}>
              <LargeIcon><PasteIcon /></LargeIcon>
              <span>粘贴</span>
              <LargeCaret><Caret /></LargeCaret>
            </Large>
            <Stack $w={80} $pl={10}>
              <SmallItem><ScissorsIcon />剪切</SmallItem>
              <SmallItem><CopyIcon />复制<Caret /></SmallItem>
              <SmallItem><BrushIcon />格式刷</SmallItem>
            </Stack>
          </GroupBody>
          <GroupLabel $launcher>剪贴板</GroupLabel>
          <Launcher><LaunchIcon /></Launcher>
        </Group>
        <Group $w={265}>
          <GroupBody $pl={9}>
            <Rows>
              <Row>
                <Combo $w={161}>宋体<Caret /></Combo>
                <Combo $w={41}>11<Caret /></Combo>
                <Tool $w={26}><SizeUp up /></Tool>
                <Tool $w={18}><SizeUp /></Tool>
              </Row>
              <Row $ml={-1}>
                <Tool $w={24} $bold>B</Tool>
                <Tool $w={26}><ItalicI>I</ItalicI></Tool>
                <Tool $w={18} $bold><u>U</u></Tool>
                <Tool $w={18}><Caret /></Tool>
                <Tool $w={4}><RowSep /></Tool>
                <Tool $w={30}><BorderIcon /></Tool>
                <Tool $w={2}><Caret /></Tool>
                <Tool $w={18}><RowSep /></Tool>
                <Tool $w={14}><FillIcon /></Tool>
                <Tool $w={20}><Caret /></Tool>
                <Tool $w={18}><FontColor /></Tool>
                <Tool $w={14}><Caret /></Tool>
                <Tool $w={10}><RowSep /></Tool>
                <Tool $w={18}><PhoneticMark>wén<b>文</b></PhoneticMark></Tool>
                <Tool $w={20}><Caret /></Tool>
              </Row>
            </Rows>
          </GroupBody>
          <GroupLabel $launcher>字体</GroupLabel>
          <Launcher><LaunchIcon /></Launcher>
        </Group>
        <Group $w={257}>
          <GroupBody $pl={8}>
            <Rows>
              <Row>
                <Tool $w={24}><Lines widths={[15, 15]} top={1} /></Tool>
                <Tool $w={24} $on><Lines widths={[15, 15, 15]} top={4} /></Tool>
                <Tool $w={22}><Lines widths={[15, 15, 15]} top={8} /></Tool>
                <Tool $w={8}><RowSep /></Tool>
                <Tool $w={24}><OrientIcon /></Tool>
                <Tool $w={4}><Caret /></Tool>
                <WrapItem $ml={33} $gap={5}><WrapIcon />自动换行</WrapItem>
              </Row>
              <Row>
                <Tool $w={24}><Lines widths={[15, 10, 15, 10]} top={3} align="left" /></Tool>
                <Tool $w={24} $on><Lines widths={[15, 10, 15, 10]} top={3} /></Tool>
                <Tool $w={22}><Lines widths={[15, 10, 15, 10]} top={3} align="right" /></Tool>
                <Tool $w={8}><RowSep /></Tool>
                <Tool $w={24}><Indent /></Tool>
                <Tool $w={22}><Indent flip /></Tool>
                <WrapItem $ml={13} $gap={5}><MergeIcon />合并后居中<CaretGap $ml={8}><Caret /></CaretGap></WrapItem>
              </Row>
            </Rows>
          </GroupBody>
          <GroupLabel $launcher>对齐方式</GroupLabel>
          <Launcher><LaunchIcon /></Launcher>
        </Group>
        <Group $w={153}>
          <GroupBody $pl={9}>
            <Rows>
              <Row><Combo $w={137} $ml={-1}>常规<Caret /></Combo></Row>
              <Row>
                <Tool $w={24}><CurrencyIcon /></Tool>
                <Tool $w={8}><Caret /></Tool>
                <Tool $w={28}><Percent>%</Percent></Tool>
                <Tool $w={20}><Comma>,</Comma></Tool>
                <Tool $w={12}><RowSep /></Tool>
                <Tool $w={18}><Decimal inc /></Tool>
                <Tool $w={30}><Decimal /></Tool>
              </Row>
            </Rows>
          </GroupBody>
          <GroupLabel $launcher>数字</GroupLabel>
          <Launcher><LaunchIcon /></Launcher>
        </Group>
        <Group $w={199}>
          <GroupBody>
            <Large $w={70}>
              <LargeIcon><CondIcon /></LargeIcon>
              <span>条件格式</span>
              <LargeCaret><Caret /></LargeCaret>
            </Large>
            <Large $w={46}>
              <LargeIcon><TableIcon /></LargeIcon>
              <span>套用</span>
              <LargeLine>表格格式<Caret /></LargeLine>
            </Large>
            <Large $w={83}>
              <LargeIcon><CellStyleIcon /></LargeIcon>
              <span>单元格样式</span>
              <LargeCaret><Caret /></LargeCaret>
            </Large>
          </GroupBody>
          <GroupLabel>样式</GroupLabel>
        </Group>
        <Group $w={147}>
          <GroupBody $pl={12}>
            <Large $w={38}>
              <LargeIcon><InsertIcon /></LargeIcon>
              <span>插入</span>
              <LargeCaret><Caret /></LargeCaret>
            </Large>
            <Large $w={48}>
              <LargeIcon><DeleteIcon /></LargeIcon>
              <span>删除</span>
              <LargeCaret><Caret /></LargeCaret>
            </Large>
            <Large $w={40}>
              <LargeIcon><FormatIcon /></LargeIcon>
              <span>格式</span>
              <LargeCaret><Caret /></LargeCaret>
            </Large>
          </GroupBody>
          <GroupLabel>单元格</GroupLabel>
        </Group>
        <Group $w={244}>
          <GroupBody $pl={13}>
            <Stack $w={90}>
              <SmallItem><SumIcon />自动求和<CaretGap $ml={6}><Caret /></CaretGap></SmallItem>
              <SmallItem><FillDown />填充<Caret /></SmallItem>
              <SmallItem><Eraser />清除<Caret /></SmallItem>
            </Stack>
            <Large $w={66}>
              <LargeIcon><SortFilter /></LargeIcon>
              <span>排序和筛选</span>
              <LargeCaret><Caret /></LargeCaret>
            </Large>
            <Large $w={68}>
              <LargeIcon><FindIcon /></LargeIcon>
              <span>查找和选择</span>
              <LargeCaret><Caret /></LargeCaret>
            </Large>
          </GroupBody>
          <GroupLabel>编辑</GroupLabel>
        </Group>
        <Group $w={72}>
          <GroupBody>
            <Large $w={72}>
              <LargeIcon><BaiduDisk /></LargeIcon>
              <span>保存到</span>
              <span>百度网盘</span>
            </Large>
          </GroupBody>
          <GroupLabel>保存</GroupLabel>
        </Group>
        <Collapse><ChevronUp /></Collapse>
      </Ribbon>
      <FormulaBar>
        <NameBox>A2<Caret c="#888" /></NameBox>
        <Dots $w={32}><i /><i /><i /></Dots>
        <FxBox>
          <CrossIcon c="#bdbdbd" s={12} />
          <Check />
          <FxText>fx</FxText>
        </FxBox>
        <FormulaInput>张三<ChevronDown c="#c4c4c4" /></FormulaInput>
      </FormulaBar>
      <SheetRow>
        <Sheet />
        <VScroll>
          <ScrollArrow><Tri dir="up" c="#777" /></ScrollArrow>
          <VThumb />
          <ScrollArrow><Tri dir="down" c="#777" /></ScrollArrow>
        </VScroll>
      </SheetRow>
      <SheetTabs>
        <NavArrows><Tri dir="left" c="#c4c4c4" /><Tri dir="right" c="#c4c4c4" /></NavArrows>
        <SheetTab $w={69} $line>Sheet1</SheetTab>
        <SheetTab $w={68}>Sheet2</SheetTab>
        <SheetTab $w={69} $active>Sheet3</SheetTab>
        <SheetTab $w={66} $line>Sheet4</SheetTab>
        <AddSheet>
          <svg width="17" height="17" viewBox="0 0 17 17" fill="none" stroke="#777"><circle cx="8.500" cy="8.500" r="7.800" /><path d="M8.500 4.500v8M4.500 8.500h8" strokeWidth="1.300" /></svg>
        </AddSheet>
        <HScroll>
          <Dots $w={14}><i /><i /><i /></Dots>
          <ScrollArrow $ml={8}><Tri dir="left" c="#555" /></ScrollArrow>
          <HThumb />
          <ScrollArrow><Tri dir="right" c="#555" /></ScrollArrow>
        </HScroll>
      </SheetTabs>
      <StatusBar>
        就绪
        <CaretGap $ml={22}><MacroIcon /></CaretGap>
        <Count>计数: 9</Count>
        <ViewBtn $on><NormalView /></ViewBtn>
        <ViewBtn><PageView /></ViewBtn>
        <ViewBtn><BreakView /></ViewBtn>
        <ZoomSign $ml={6}>−</ZoomSign>
        <ZoomTrack><i /></ZoomTrack>
        <ZoomSign>+</ZoomSign>
        <ZoomText>100%</ZoomText>
      </StatusBar>
      <SortDialog />
      <ArrowMark width="70" height="115" viewBox="0 0 70 115">
        <path d="M12 106 50 22 47 20 60 8 62 29 58 26z" fill="#e5302c" />
      </ArrowMark>
      <Watermark>
        <Paw width="90" height="105" viewBox="0 0 90 105" fill="rgba(255,255,255,.7)" stroke="#cfcfcf" strokeWidth="1.500">
          <ellipse cx="32" cy="23" rx="10" ry="15" />
          <ellipse cx="57" cy="25" rx="10" ry="14" />
          <ellipse cx="11" cy="43" rx="10" ry="15" />
          <ellipse cx="73" cy="49" rx="10" ry="14" />
          <path d="M42 46c10 0 16 9 22 17 6 7 9 12 7 22-2 10-13 14-24 12-7-1-11-1-17 0C18 99 7 94 7 83c0-9 6-14 12-21 6-8 12-16 23-16z" />
        </Paw>
        <MarkText $x={3} $y={48} $size={66} $lh={0.8}>Bai</MarkText>
        <MarkText $x={118} $y={60} $size={42} $weight={400}>du</MarkText>
        <MarkText $x={188} $y={48} $size={50}>经验</MarkText>
        <MarkText $x={2} $y={108} $size={35} $weight={400}>jingyan.baidu.com</MarkText>
      </Watermark>
      <Meter><i /></Meter>
    </Page>
  );
}
